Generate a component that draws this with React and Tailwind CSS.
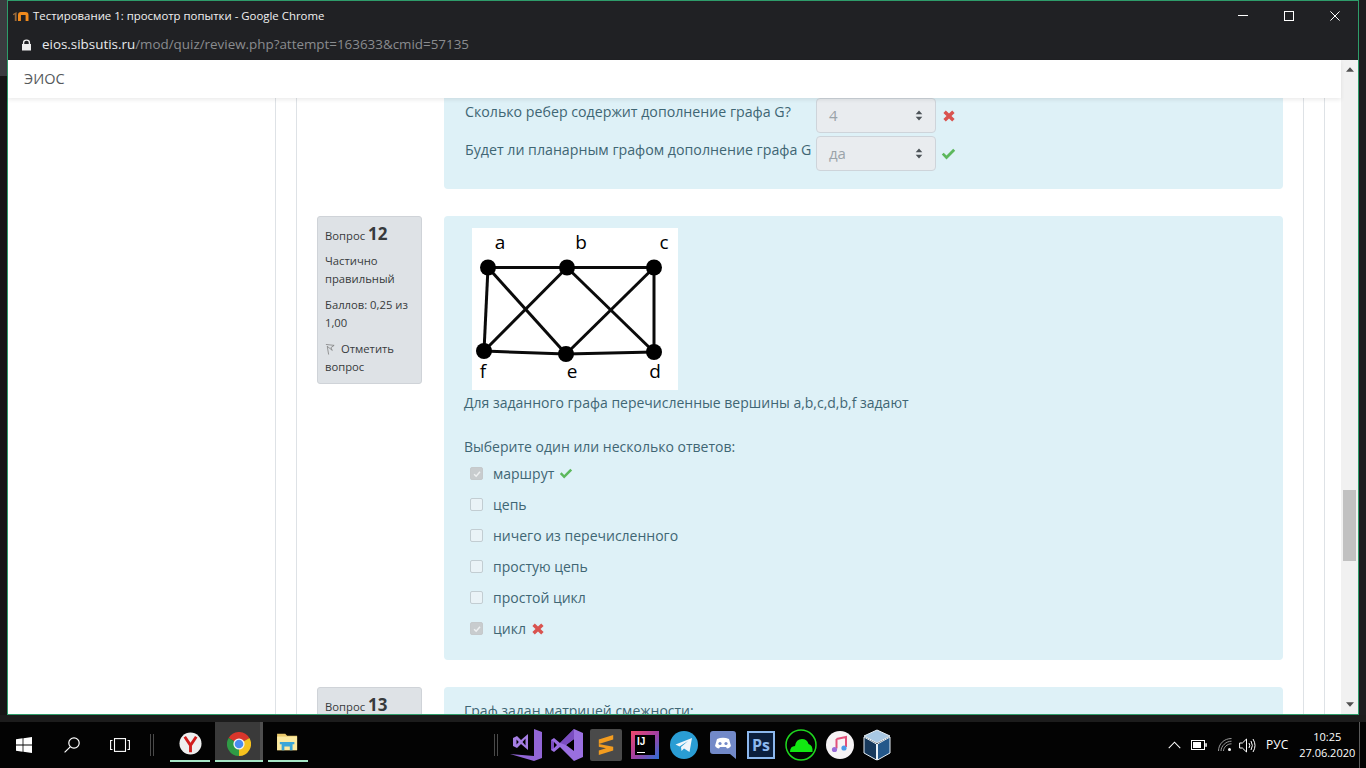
import React from "react";

const Check = ({ className = "" }) => (
  <svg viewBox="0 0 14 12" className={className} fill="#5cb85c">
    <path d="M0.3 6.6 2.2 4.7 5 7.5 11.7 0.8 13.7 2.7 5 11.4Z" />
  </svg>
);
const Cross = ({ className = "" }) => (
  <svg viewBox="0 0 12 12" className={className} fill="#d9534f">
    <path d="M2.8 0.6 6 3.6 9.2 0.6 11.6 3 8.5 6 11.6 9 9.2 11.4 6 8.4 2.8 11.4 0.4 9 3.5 6 0.4 3Z" />
  </svg>
);

const Select = ({ value }) => (
  <div className="flex h-[35px] w-[120px] shrink-0 items-center justify-between rounded-[4px] border border-[#ced4da] bg-[#e9ecef] pl-[12px] pr-[12px] text-[15px] text-[#9aa3a9]">
    <span>{value}</span>
    <svg viewBox="0 0 8 12" className="h-[11px] w-[8px]" fill="#4d5358">
      <path d="M4 0.5 7.6 4.7H0.4Z M4 11.5 0.4 7.3H7.6Z" />
    </svg>
  </div>
);

const Info = ({ n, children }) => (
  <div className="w-[105px] shrink-0 self-start rounded-[3px] border border-[#cfd3d8] bg-[#dee2e6] px-[7px] pb-[7px] pt-[5px] text-[11.25px] leading-[18px] text-[#373a3c]">
    <div className="flex items-baseline gap-[3px] leading-[24px]">
      <span>Вопрос</span>
      <b className="text-[17px] font-bold">{n}</b>
    </div>
    {children}
  </div>
);

const Option = ({ label, checked, mark }) => (
  <div className="flex h-[31px] items-center pl-[6px]">
    <span
      className={`flex h-[13px] w-[13px] shrink-0 items-center justify-center rounded-[2px] border ${
        checked ? "border-[#c5c9cb] bg-[#c8ccce]" : "border-[#c2cdd2] bg-[#eaf3f7]"
      }`}
    >
      {checked && (
        <svg viewBox="0 0 12 12" className="h-[10px] w-[10px]" fill="none" stroke="#eef0f1" strokeWidth="1.8">
          <path d="M2.5 6.2 5 8.7 9.6 3.4" />
        </svg>
      )}
    </span>
    <span className="ml-[10px]">{label}</span>
    {mark === "ok" && <Check className="ml-[5px] h-[11px] w-[14px]" />}
    {mark === "no" && <Cross className="ml-[6px] h-[12px] w-[12px]" />}
  </div>
);

const Graph = () => {
  const p = { a: [16, 39.5], b: [95, 39.5], c: [182, 39.5], d: [182, 124], e: [94, 126], f: [12, 123] };
  const edges = ["ab", "bc", "af", "fe", "ed", "cd", "ae", "bf", "bd", "ce"];
  const labels = [["a", 28, 21], ["b", 109, 21], ["c", 192, 21], ["f", 11, 150], ["e", 100, 150], ["d", 183, 150]];
  return (
    <svg width="206" height="162" viewBox="0 0 206 162" className="block bg-white">
      {edges.map((e) => (
        <line key={e} x1={p[e[0]][0]} y1={p[e[0]][1]} x2={p[e[1]][0]} y2={p[e[1]][1]} stroke="#0a0a0a" strokeWidth="3" />
      ))}
      {Object.keys(p).map((k) => (
        <circle key={k} cx={p[k][0]} cy={p[k][1]} r="8" fill="#000" />
      ))}
      {labels.map(([t, x, y]) => (
        <text key={t} x={x} y={y} textAnchor="middle" fontSize="19" fontFamily="'Open Sans', sans-serif" fill="#000">
          {t}
        </text>
      ))}
    </svg>
  );
};

const Taskbar = () => (
  <div className="flex h-[46px] items-center bg-[#030303] text-white">
    {/* start */}
    <svg viewBox="0 0 16 16" className="ml-[16px] h-[16px] w-[16px]" fill="#fff">
      <path d="M0 2.3 6.6 1.3V7.6H0Z M7.4 1.2 16 0V7.6H7.4Z M0 8.4H6.6V14.7L0 13.7Z M7.4 8.4H16V16L7.4 14.8Z" />
    </svg>
    <svg viewBox="0 0 16 16" className="ml-[32px] h-[16px] w-[16px]" fill="none" stroke="#fff" strokeWidth="1.2">
      <circle cx="10" cy="6" r="5.2" />
      <path d="M6.2 9.8 0.6 15.4" />
    </svg>
    <svg viewBox="0 0 20 14" className="ml-[30px] h-[14px] w-[20px]" fill="none" stroke="#fff" strokeWidth="1.1">
      <rect x="4.5" y="0.6" width="11" height="12.8" />
      <path d="M2.5 2.5H0.6V11.5H2.5 M17.5 2.5H19.4V11.5H17.5" />
    </svg>
    <div className="ml-[20px] box-content h-[22px] w-[2px] border-x border-x-[#4a4a4a]" />
    {/* yandex */}
    <div className="ml-[16px] flex h-[40px] w-[40px] flex-col items-center justify-between self-start pt-[10px]">
      <svg viewBox="0 0 24 24" className="h-[23px] w-[23px]">
        <circle cx="12" cy="12" r="11.5" fill="#efefef" />
        <path d="M6 5 12 14 18 5 M12 14V21" fill="none" stroke="#d11d1d" strokeWidth="3" />
      </svg>
      <div className="h-[2px] w-full bg-[#a5e6c6]" />
    </div>
    {/* chrome */}
    <div className="ml-[5px] flex h-[40px] w-[48px] flex-col justify-between self-start bg-[linear-gradient(90deg,#3a3a3a_0%,#3a3a3a_93%,#4e4e4e_93%,#4e4e4e_100%)] pt-[10px]">
      <svg viewBox="0 0 24 24" className="mx-[12px] h-[24px] w-[24px]">
        <path d="M12 12 1.6 6A12 12 0 0 1 22.4 6Z" fill="#d9362c" />
        <path d="M12 12 22.4 6A12 12 0 0 1 12 24Z" fill="#f5c11e" />
        <path d="M12 12 12 24A12 12 0 0 1 1.6 6Z" fill="#2f9a45" />
        <circle cx="12" cy="12" r="5.6" fill="#f4f4f4" />
        <circle cx="12" cy="12" r="4.3" fill="#4a8cf0" />
      </svg>
      <div className="h-[2px] w-full bg-[#a5e6c6]" />
    </div>
    {/* explorer */}
    <div className="ml-[5px] flex h-[40px] w-[40px] flex-col items-center justify-between self-start pt-[10px]">
      <svg viewBox="0 0 24 22" className="h-[20px] w-[22px]">
        <path d="M0 2H9L11 4H22V20H0Z" fill="#e9c86a" />
        <path d="M0 5H22V20H0Z" fill="#fbe9a0" />
        <path d="M5 20V13H17V20H14V16H8V20Z" fill="#3aa6d8" />
        <rect x="3" y="11" width="16" height="2.5" fill="#3aa6d8" />
      </svg>
      <div className="h-[2px] w-full bg-[#a5e6c6]" />
    </div>
    <div className="ml-[186px] box-content h-[22px] w-[2px] border-x border-x-[#4a4a4a]" />
    {/* pinned */}
    <svg viewBox="0 0 32 32" className="ml-[12px] h-[32px] w-[32px]">
      <path d="M24 0 32 3V29L24 32 0 25 24 27V5Z" fill="#9266d6" />
      <path d="M3 9 7 7 11 11 18 5V21L11 15 7 19 3 17ZM6.5 10.5V15.5L8.8 13ZM15.5 9.5 12.5 13 15.5 16.5Z" fill="#a57ee3" fillRule="evenodd" />
    </svg>
    <svg viewBox="0 0 32 32" className="ml-[9px] h-[32px] w-[32px]">
      <path d="M23 0 32 4V28L23 32 9 18 3 23 0 21V11L3 9 9 14Z" fill="#9a6fe0" />
      <path d="M23 10 15 16 23 22Z M3 13V19L6 16Z" fill="#000" />
      <path d="M23 0V10L15 16 9 14Z M0 11 3 13V19L0 21Z" fill="#7a4cc0" />
    </svg>
    <div className="ml-[7px] flex h-[32px] w-[32px] items-center justify-center rounded-[2px] bg-[#4a4a4a]">
      <svg viewBox="0 0 20 24" className="h-[22px] w-[18px]" fill="#f39c1f">
        <path d="M18 1V6L2 11V6Z M2 11 18 14V18L2 23V18L10 15.5 2 14Z" />
      </svg>
    </div>
    <div className="ml-[9px] flex h-[28px] w-[28px] items-center justify-center bg-[linear-gradient(135deg,#f0486b_0%,#a43fa0_50%,#2b6fd6_100%)]">
      <div className="flex h-[20px] w-[20px] flex-col justify-between bg-black px-[2px] py-[1px] font-['Liberation_Sans',sans-serif] text-[10px] font-bold leading-[12px] text-white">
        <span>IJ</span>
        <span className="mb-[1px] h-[1px] w-[8px] bg-white" />
      </div>
    </div>
    <svg viewBox="0 0 28 28" className="ml-[11px] h-[28px] w-[28px]">
      <circle cx="14" cy="14" r="14" fill="#2a9dd4" />
      <path d="M5.5 13.5 22 7 19.5 21 14 17.5 11.5 20 11 16 18 10 9.5 15.5Z" fill="#f1f6fa" />
    </svg>
    <svg viewBox="0 0 26 28" className="ml-[12px] h-[28px] w-[26px]">
      <path d="M3 0H23A3 3 0 0 1 26 3V28L20 23H3A3 3 0 0 1 0 20V3A3 3 0 0 1 3 0Z" fill="#7289c8" />
      <path d="M7 8Q13 5.5 19 8L21 15Q19 17.5 17 17.5L16 16H10L9 17.5Q7 17.5 5 15Z" fill="#fff" />
      <circle cx="10" cy="12.5" r="1.6" fill="#7289c8" />
      <circle cx="16" cy="12.5" r="1.6" fill="#7289c8" />
    </svg>
    <div className="ml-[11px] flex h-[28px] w-[28px] items-center justify-center border-2 border-[#8cb8ee] bg-[#0b1f3d] font-['Open_Sans',sans-serif] text-[16px] font-bold leading-none text-[#8cb8ee]">
      Ps
    </div>
    <svg viewBox="0 0 32 32" className="ml-[10px] h-[32px] w-[32px]">
      <circle cx="16" cy="16" r="15" fill="none" stroke="#1fd81f" strokeWidth="1.5" />
      <path d="M5 23Q5 17 10 17Q11 10 17 10Q22 10 23.5 15Q28 16 27.5 23Z" fill="#12e812" />
    </svg>
    <svg viewBox="0 0 28 28" className="ml-[9px] h-[28px] w-[28px]">
      <circle cx="14" cy="14" r="14" fill="#f6f3f5" />
      <path d="M10.5 8V17.5M10.5 8 20 6V16" fill="none" stroke="#e2507a" strokeWidth="2" />
      <circle cx="8.5" cy="18.5" r="2.6" fill="#9a6cd8" />
      <circle cx="18" cy="17" r="2.6" fill="#4a9ae8" />
    </svg>
    <svg viewBox="0 0 28 32" className="ml-[9px] h-[32px] w-[28px]">
      <path d="M14 1 27 7 14 14 1 7Z" fill="#a8c8e4" stroke="#e8f0f6" />
      <path d="M1 8 13.5 15V31L1 24Z" fill="#17395c" stroke="#e8f0f6" />
      <path d="M27 8 14.5 15V31L27 24Z" fill="#24588a" stroke="#e8f0f6" />
    </svg>
    {/* tray */}
    <svg viewBox="0 0 14 8" className="ml-[277px] h-[8px] w-[13px]" fill="none" stroke="#fff" strokeWidth="1.1">
      <path d="M0.8 7.4 7 1 13.2 7.4" />
    </svg>
    <svg viewBox="0 0 16 10" className="ml-[10px] h-[10px] w-[16px]">
      <rect x="0.5" y="0.5" width="13" height="9" fill="none" stroke="#fff" />
      <rect x="2" y="2" width="8" height="6" fill="#fff" />
      <rect x="14.3" y="3.2" width="1.5" height="3.6" fill="#fff" />
    </svg>
    <svg viewBox="0 0 14 14" className="ml-[11px] h-[14px] w-[14px]" fill="none" stroke="#9a9a9a" strokeWidth="1">
      <path d="M0.5 13C0.5 6 6 0.5 13.5 0.5 M3 13C3 8 8 3.2 13.5 3.2 M5.5 13C5.5 9.5 9 5.8 13.5 5.8" />
      <circle cx="11.5" cy="11.5" r="1.5" fill="#fff" stroke="none" />
    </svg>
    <svg viewBox="0 0 17 15" className="ml-[7px] h-[15px] w-[17px]" fill="none" stroke="#fff" strokeWidth="1">
      <path d="M0.6 5H3.4L7.5 1V14L3.4 10H0.6Z M10 5Q11.5 7.5 10 10 M12 3Q14.7 7.5 12 12 M14 1Q18 7.5 14 14" />
    </svg>
    <span className="ml-[10px] font-['Open_Sans',sans-serif] text-[12px] text-white">РУС</span>
    <div className="ml-[11px] flex w-[56px] flex-col items-center font-['Open_Sans',sans-serif] text-[11px] leading-[16px] text-white">
      <span>10:25</span>
      <span>27.06.2020</span>
    </div>
    <div className="ml-[4px] h-[46px] w-px bg-[#5a5a5a]" />
  </div>
);

export default function App() {
  return (
    <div className="flex h-[768px] w-[1366px] flex-col overflow-hidden bg-[#1c1c1c] font-['Open_Sans',sans-serif]">
      <div className="flex h-[715px] shrink-0">
        <div className="flex w-[7px] shrink-0 flex-col">
          <div className="h-[76px] bg-[#3a3b3f]" />
          <div className="flex-1 bg-[#161616]" />
        </div>
        <div className="flex w-[1352px] shrink-0 flex-col border border-[#2e9c6a]">
          {/* title bar */}
          <div className="flex h-[29px] shrink-0 items-center bg-[#202124] pl-[5px] text-white">
            <svg viewBox="0 0 16 10" className="h-[10px] w-[16px]">
              <path d="M0 3 3.6 1V10H1.8V3.5L0 4.2Z" fill="#9a6a3a" />
              <path d="M5 10V4Q5 1 8 1H12.5Q15.5 1 15.5 4V10H12.6V4H7.9V10Z" fill="#f08a1c" />
            </svg>
            <span className="ml-[4px] text-[11.4px] leading-none text-[#f1f1f1]">Тестирование 1: просмотр попытки - Google Chrome</span>
            <div className="ml-auto flex items-center pr-[18px]">
              <div className="h-px w-[10px] bg-white" />
              <div className="ml-[36px] h-[10px] w-[10px] border border-white" />
              <svg viewBox="0 0 12 12" className="ml-[36px] h-[10px] w-[10px]" stroke="#fff" strokeWidth="1.2">
                <path d="M0.5 0.5 11.5 11.5 M11.5 0.5 0.5 11.5" />
              </svg>
            </div>
          </div>
          {/* url bar */}
          <div className="flex h-[30px] shrink-0 items-center bg-[#202124] pl-[14px]">
            <svg viewBox="0 0 10 12" className="h-[12px] w-[9px]" fill="#eee">
              <path d="M1 5V3.5A4 3.5 0 0 1 9 3.5V5H10V12H0V5ZM2.5 5H7.5V3.5A2.5 2.2 0 0 0 2.5 3.5Z" fillRule="evenodd" />
            </svg>
            <span className="ml-[11px] text-[13.4px] leading-none text-[#e8eaed]">
              eios.sibsutis.ru<span className="text-[#8a8c8f]">/mod/quiz/review.php?attempt=163633&amp;cmid=57135</span>
            </span>
          </div>
          <div className="flex min-h-0 flex-1">
            <div className="flex min-w-0 flex-1 flex-col">
              {/* nav */}
              <div className="relative z-10 flex h-[38px] shrink-0 items-center bg-white pl-[16px] text-[14.5px] text-[#55595c] shadow-[0_2px_4px_rgba(0,0,0,0.08)]">
                ЭИОС
              </div>
              {/* page */}
              <div className="flex min-h-0 flex-1 overflow-hidden bg-white pl-[267px] text-[#3f6674]">
                <div className="flex w-[1050px] border-x border-[#dee2e6] pl-[20px] pr-[20px]">
                  <div className="flex w-[1008px] flex-col gap-[27px] border-x border-[#dee2e6] pl-[20px]">
                    {/* question 11 tail */}
                    <div className="flex shrink-0 pl-[127px]">
                      <div className="w-[839px] rounded-b-[4px] bg-[#def1f7] pb-[18px] pl-[21px] text-[14.2px]">
                        <div className="flex">
                          <span className="w-[351px] pt-[3px]">Сколько ребер содержит дополнение графа G?</span>
                          <Select value="4" />
                          <Cross className="ml-[7px] mt-[12px] h-[12px] w-[12px]" />
                        </div>
                        <div className="mt-[3px] flex">
                          <span className="w-[351px] pt-[3px]">Будет ли планарным графом дополнение графа G</span>
                          <Select value="да" />
                          <Check className="ml-[5px] mt-[12px] h-[12px] w-[15px]" />
                        </div>
                      </div>
                    </div>
                    {/* question 12 */}
                    <div className="flex shrink-0 gap-[22px]">
                      <Info n="12">
                        <div className="mt-[4px]">Частично правильный</div>
                        <div className="mt-[8px]">Баллов: 0,25 из 1,00</div>
                        <div className="mt-[8px]">
                          <svg viewBox="0 0 10 12" className="mr-[6px] inline-block h-[11px] w-[10px]" fill="none" stroke="#777" strokeWidth="0.8">
                            <path d="M0.5 0.5 9.5 1.5 6 4 7.5 7 2 2.5 3.5 11.5" />
                          </svg>
                          Отметить вопрос
                        </div>
                      </Info>
                      <div className="w-[839px] rounded-[4px] bg-[#def1f7] pb-[16px] pl-[20px] pt-[12px] text-[14px]">
                        <div className="ml-[8px] w-[206px]">
                          <Graph />
                        </div>
                        <div className="mt-[1px] leading-[24px]">Для заданного графа перечисленные вершины a,b,c,d,b,f задают</div>
                        <div className="mt-[20px] leading-[24px]">Выберите один или несколько ответов:</div>
                        <div className="-mt-[1px]">
                          <Option label="маршрут" checked mark="ok" />
                          <Option label="цепь" />
                          <Option label="ничего из перечисленного" />
                          <Option label="простую цепь" />
                          <Option label="простой цикл" />
                          <Option label="цикл" checked mark="no" />
                        </div>
                      </div>
                    </div>
                    {/* question 13 */}
                    <div className="flex shrink-0 gap-[22px]">
                      <Info n="13">
                        <div className="mt-[4px]">Частично правильный</div>
                      </Info>
                      <div className="h-[200px] w-[839px] rounded-[4px] bg-[#def1f7] pl-[20px] pt-[13px] text-[14px]">
                        Граф задан матрицей смежности:
                      </div>
                    </div>
                  </div>
                </div>
              </div>
            </div>
            {/* scrollbar */}
            <div className="flex w-[17px] shrink-0 flex-col items-center bg-[#f1f1f1]">
              <svg viewBox="0 0 9 5" className="mt-[7px] h-[5px] w-[8px]" fill="#505050"><path d="M4.5 0 9 5H0Z" /></svg>
              <div className="mt-[418px] h-[71px] w-[13px] bg-[#c1c1c1]" />
              <svg viewBox="0 0 9 5" className="mt-[141px] h-[5px] w-[8px]" fill="#505050"><path d="M4.5 5 9 0H0Z" /></svg>
            </div>
          </div>
        </div>
        <div className="flex-1 bg-[#1d1d1f]" />
      </div>
      <div className="h-[7px] shrink-0 bg-[#1c1c1c]" />
      <Taskbar />
    </div>
  );
}
